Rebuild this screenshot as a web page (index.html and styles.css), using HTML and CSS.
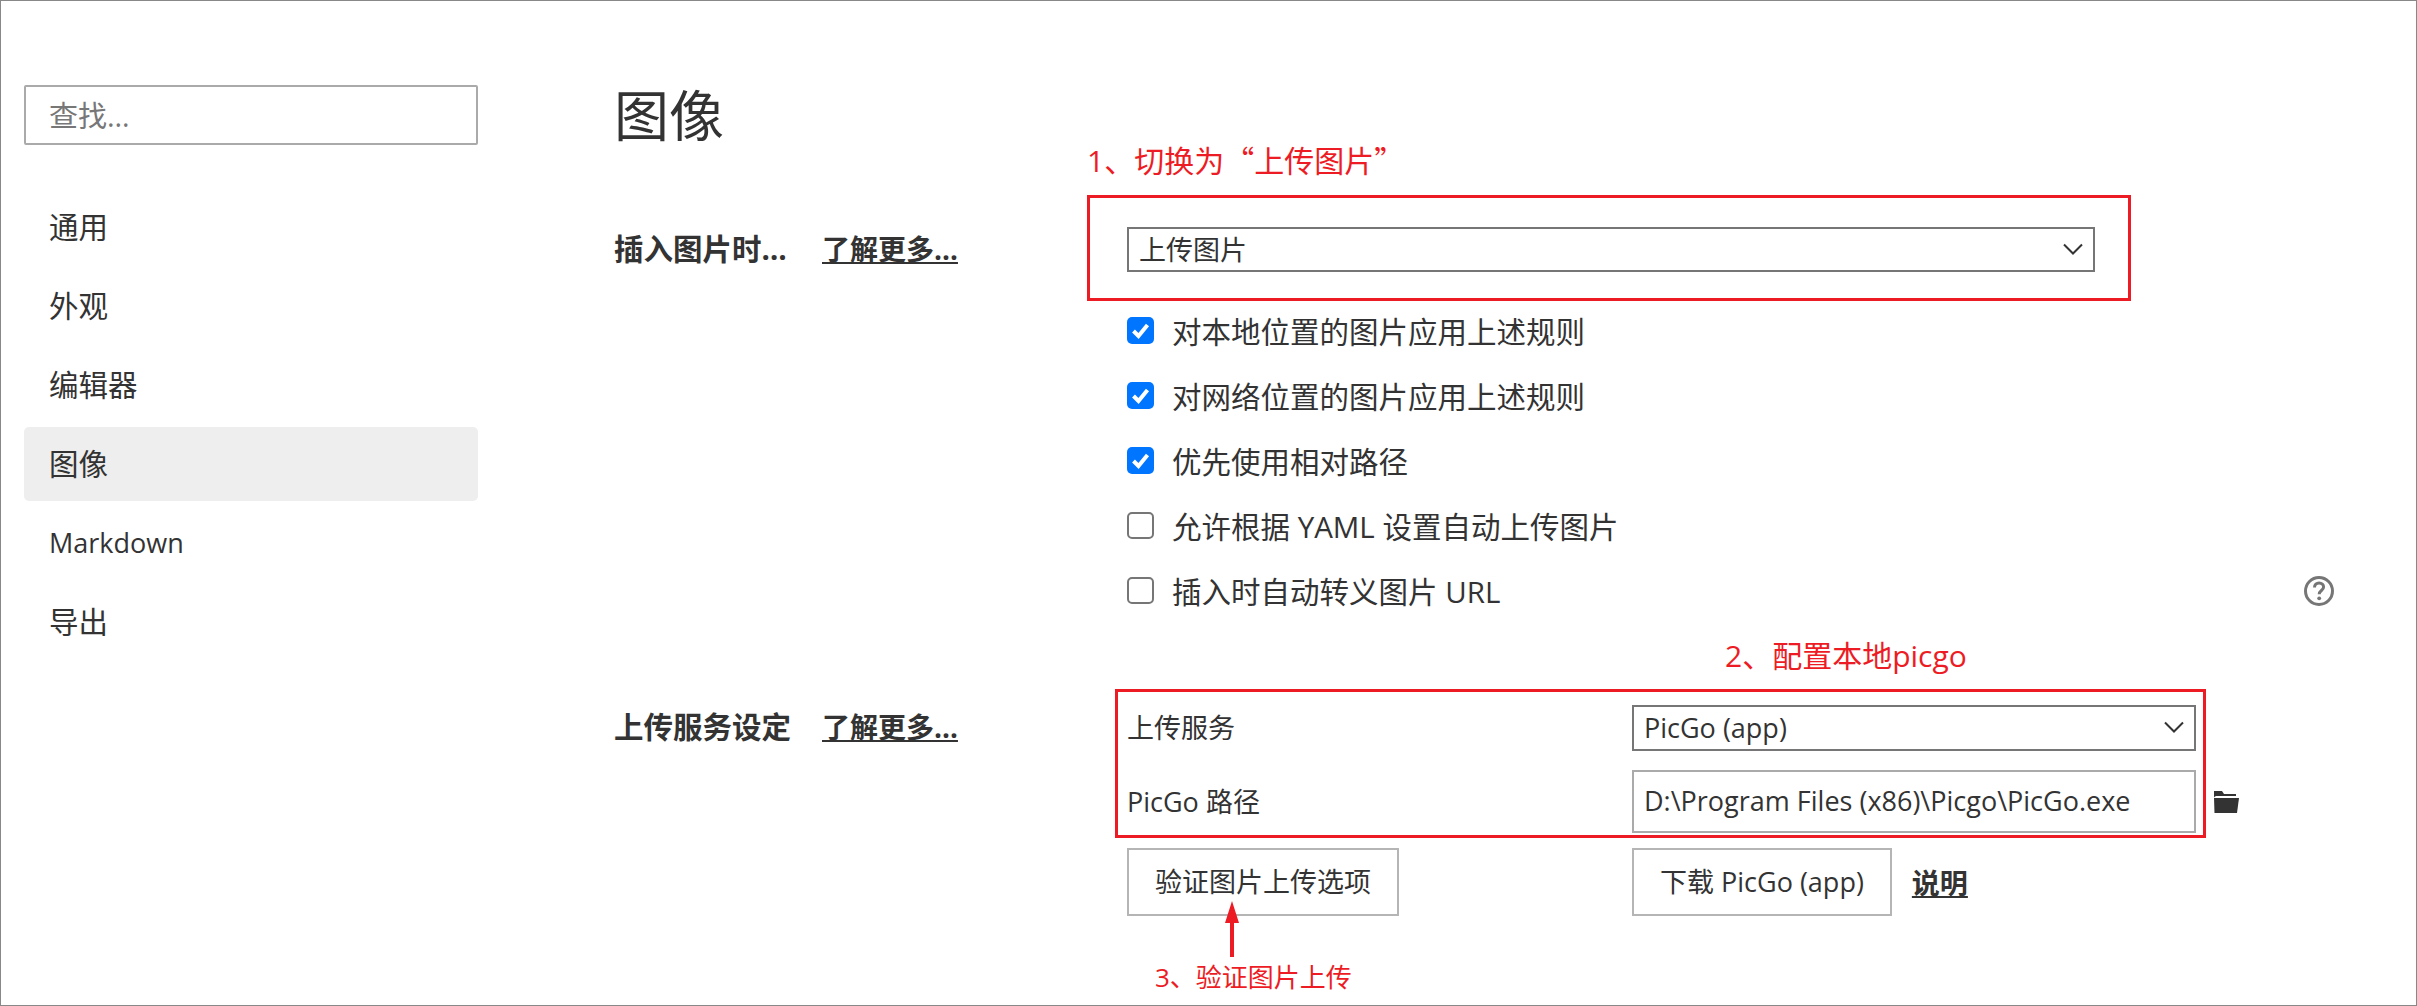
FILE: index.html
```html
<!DOCTYPE html>
<html lang="zh-CN">
  <head>
    <meta charset="UTF-8" />
    <title>偏好设置</title>
    <link rel="stylesheet" href="styles.css">
  </head>
  <body>
    <div class="window">
      <aside class="sidebar">
        <input class="search" type="text" placeholder="查找…" />
        <nav class="menu">
          <a>通用</a>
          <a>外观</a>
          <a>编辑器</a>
          <a class="valgt">图像</a>
          <a class="latin">Markdown</a>
          <a>导出</a>
        </nav>
      </aside>

      <main class="content">
        <h1>图像</h1>

        <section class="setting">
          <div class="setting-title"><b>插入图片时…</b><a class="more">了解更多…</a></div>
          <div class="setting-body">
            <div class="dropdown">
              <span>上传图片</span>
              <svg class="chevron" viewBox="0 0 20 12"><path d="M1 1.5 10 10.5 19 1.5" /></svg>
            </div>
            <div class="checks">
              <div class="check-row">
                <span class="box on"><svg viewBox="0 0 27 27"><path d="M6.5 14 11.5 19 20.5 8" /></svg></span>
                <span>对本地位置的图片应用上述规则</span>
              </div>
              <div class="check-row">
                <span class="box on"><svg viewBox="0 0 27 27"><path d="M6.5 14 11.5 19 20.5 8" /></svg></span>
                <span>对网络位置的图片应用上述规则</span>
              </div>
              <div class="check-row">
                <span class="box on"><svg viewBox="0 0 27 27"><path d="M6.5 14 11.5 19 20.5 8" /></svg></span>
                <span>优先使用相对路径</span>
              </div>
              <div class="check-row">
                <span class="box"></span>
                <span>允许根据 YAML 设置自动上传图片</span>
              </div>
              <div class="check-row">
                <span class="box"></span>
                <span>插入时自动转义图片 URL</span>
                <svg class="help" viewBox="0 0 32 32">
                  <circle cx="16" cy="16" r="13.5" />
                  <path d="M11.5 12.5c0-2.8 2-4.5 4.6-4.5s4.5 1.700 4.500 4c0 3.400-4.400 3.600-4.400 7.200" />
                  <circle class="dot" cx="16.200" cy="23.300" r="1.900" />
                </svg>
              </div>
            </div>
          </div>
        </section>

        <section class="setting upload">
          <div class="setting-title"><b>上传服务设定</b><a class="more">了解更多…</a></div>
          <div class="upload-grid">
            <label>上传服务</label>
            <div class="dropdown small">
              <span>PicGo (app)</span>
              <svg class="chevron" viewBox="0 0 20 12"><path d="M1 1.5 10 10.5 19 1.5" /></svg>
            </div>
            <span></span>

            <label>PicGo 路径</label>
            <div class="path">D:\Program Files (x86)\Picgo\PicGo.exe</div>
            <svg class="folder" viewBox="0 0 27 22">
              <path d="M2 0h8l2 3h12v2H4.500C3 5 2 6 2 7z" />
              <path d="M2 7h25l-2 15H2.500z" />
            </svg>

            <div class="actions"><button>验证图片上传选项</button></div>
            <div class="actions"><button>下载 PicGo (app)</button><a class="more">说明</a></div>
            <span></span>
          </div>
        </section>
      </main>

      <div class="note note-1">1、切换为<span class="quote">“</span>上传图片<span class="quote">”</span></div>
      <div class="red-box box-1"></div>
      <div class="note note-2">2、配置本地picgo</div>
      <div class="red-box box-2"></div>
      <svg class="arrow" viewBox="0 0 16 58">
        <path d="M8 0 15 22H10V56H6V22H1z" />
      </svg>
      <div class="note note-3">3、验证图片上传</div>
    </div>
  </body>
</html>
```

FILE: styles.css
```css
* {
  box-sizing: border-box;
}

body {
  margin: 0;
  background-color: white;
  color: #333;
  font-family: "Open Sans", "Noto Sans CJK SC", sans-serif;
}

.window {
  position: relative;
  display: flex;
  height: 1006px;
  border: 1px solid #888;
  overflow: hidden;
}

/* sidebar */
.sidebar {
  width: 454px;
  margin-left: 23px;
  padding-top: 84px;
  flex-shrink: 0;
}

.search {
  display: block;
  width: 100%;
  height: 60px;
  padding: 0 23px;
  border: 2px solid #aaa;
  border-radius: 2px;
  font: inherit;
  font-size: 29px;
}

.search::placeholder {
  color: #777;
}

.menu {
  display: flex;
  flex-direction: column;
  gap: 5px;
  margin-top: 45px;
}

.menu a {
  height: 74px;
  padding-left: 25px;
  border-radius: 5px;
  font-size: 29.5px;
  line-height: 74px;
}

.menu .valgt {
  background-color: #eee;
}

.menu .latin {
  font-size: 27px;
}

/* main column */
.content {
  flex: 1;
  margin-left: 136px;
  padding: 84px 81px 0 0;
}

h1 {
  margin: 0;
  font-size: 55px;
  font-weight: 400;
  line-height: 60px;
}

.setting {
  display: grid;
  grid-template-columns: 513px 1fr;
  margin-top: 82px;
}

.setting-title {
  display: flex;
  align-items: center;
  height: 41px;
  font-size: 29.5px;
}

.setting-title b {
  width: 208px;
}

.more {
  font-size: 28px;
  font-weight: 700;
  text-decoration: underline;
}

.dropdown {
  display: flex;
  align-items: center;
  justify-content: space-between;
  width: 968px;
  height: 45px;
  padding: 0 10px 2px 10px;
  border: 2px solid #767676;
  font-size: 27px;
}

.chevron {
  width: 20px;
  height: 12px;
  fill: none;
  stroke: #333;
  stroke-width: 2;
}

.checks {
  margin-top: 26px;
}

.check-row {
  display: flex;
  align-items: center;
  gap: 18px;
  height: 65px;
  font-size: 29.5px;
}

.box {
  width: 27px;
  height: 27px;
  border: 2px solid #767676;
  border-radius: 5px;
  flex-shrink: 0;
}

.box.on {
  border: 0;
  background-color: #0075ff;
}

.box svg {
  display: block;
  fill: none;
  stroke: white;
  stroke-width: 4;
}

.help {
  width: 32px;
  height: 32px;
  margin-left: auto;
  fill: none;
  stroke: #767676;
  stroke-width: 3;
}

.help .dot {
  fill: #767676;
  stroke: none;
}

/* upload settings */
.upload-grid {
  display: grid;
  grid-template-columns: 505px 564px auto;
  grid-template-rows: 46px 63px 64px;
  row-gap: 19px;
  align-items: center;
  font-size: 27px;
}

.upload-grid label {
  padding-bottom: 3px;
}

.upload-grid .dropdown {
  width: 100%;
  height: 46px;
}

.path {
  display: flex;
  align-items: center;
  height: 63px;
  padding: 0 10px 2px;
  border: 2px solid #aaa;
}

.folder {
  width: 27px;
  height: 22px;
  margin-left: 16px;
  fill: #333;
}

.actions {
  display: flex;
  align-items: center;
  gap: 20px;
  margin-top: -4px;
}

button {
  height: 68px;
  padding: 0 26px 3px;
  border: 2px solid #b5b5b5;
  background-color: white;
  color: #333;
  font: inherit;
}

/* red annotations over the screenshot */
.red-box {
  position: absolute;
  border: 3px solid #ed1c24;
}

.box-1 {
  left: 1086px;
  top: 194px;
  width: 1044px;
  height: 106px;
}

.box-2 {
  left: 1114px;
  top: 688px;
  width: 1091px;
  height: 149px;
}

.note {
  position: absolute;
  color: #ed1c24;
  font-size: 30px;
  white-space: nowrap;
}

.note .quote {
  font-family: "Noto Sans CJK SC", sans-serif;
}

.note-1 {
  left: 1086px;
  top: 136px;
}

.note-2 {
  left: 1724px;
  top: 631px;
}

.note-3 {
  left: 1154px;
  top: 956px;
  font-size: 26px;
}

.arrow {
  position: absolute;
  left: 1223px;
  top: 900px;
  width: 16px;
  height: 58px;
  fill: #ed1c24;
}
```
